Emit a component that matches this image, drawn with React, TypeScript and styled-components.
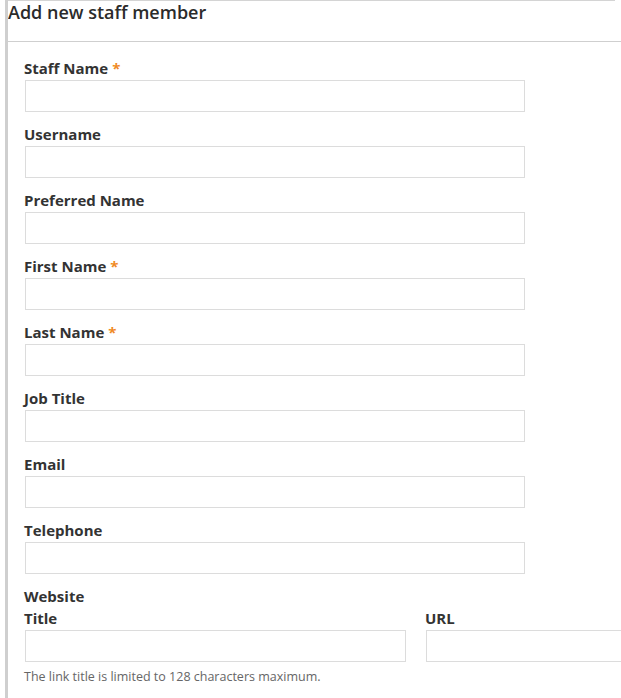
import styled, { createGlobalStyle } from 'styled-components';

const GlobalStyle = createGlobalStyle`
  html, body {
    margin: 0;
    padding: 0;
    background: #fff;
  }
  body {
    font-family: 'Open Sans', 'Noto Sans', sans-serif;
    color: #333;
    overflow: hidden;
  }
`;

const Panel = styled.div`
  margin-left: 5px;
  border-left: 3px solid #cfcfcf;
  min-height: 698px;
  overflow: hidden;
`;

const Header = styled.div`
  height: 42px;
  border-bottom: 1px solid #cfcfcf;
  box-sizing: border-box;
`;

const Heading = styled.h2`
  margin: 0 6px 0 0;
  border-top: 1px solid #d4d4d4;
  font-size: 18px;
  font-weight: 600;
  line-height: 22px;
  color: #2b2b2b;
`;

const Body = styled.div`
  padding: 16px 0 0 16px;
  display: flex;
  flex-direction: column;
  gap: 12px;
`;

const Field = styled.div`
  display: flex;
  flex-direction: column;
`;

const Label = styled.label`
  font-size: 15px;
  font-weight: 700;
  line-height: 20px;
  color: #333;
  margin-bottom: 2px;
`;

const Required = styled.span`
  color: #f08a24;
  margin-left: 4px;
`;

const TextInput = styled.input<{ $width?: number }>`
  box-sizing: border-box;
  width: ${(p) => (p.$width ? `${p.$width}px` : '500px')};
  height: 32px;
  margin-left: 1px;
  border: 1px solid #dcdcdc;
  border-radius: 0;
  padding: 4px 8px;
  font-family: inherit;
  font-size: 14px;
  outline: none;
  background: #fff;
`;

const LinkRow = styled.div`
  display: flex;
  gap: 19px;
`;

const LinkCol = styled.div`
  display: flex;
  flex-direction: column;
  flex-shrink: 0;
`;

const Help = styled.div`
  margin-top: 7px;
  font-size: 12.5px;
  line-height: 16px;
  color: #666;
`;

const fields = [
  { label: 'Staff Name', required: true },
  { label: 'Username' },
  { label: 'Preferred Name' },
  { label: 'First Name', required: true },
  { label: 'Last Name', required: true },
  { label: 'Job Title' },
  { label: 'Email' },
  { label: 'Telephone' },
];

export default function App() {
  return (
    <>
      <GlobalStyle />
      <Panel>
        <Header>
          <Heading>Add new staff member</Heading>
        </Header>
        <Body>
          {fields.map((f) => (
            <Field key={f.label}>
              <Label>
                {f.label}
                {f.required && <Required>*</Required>}
              </Label>
              <TextInput type="text" />
            </Field>
          ))}
          <Field>
            <Label>Website</Label>
            <LinkRow>
              <LinkCol>
                <Label>Title</Label>
                <TextInput type="text" $width={381} />
              </LinkCol>
              <LinkCol>
                <Label>URL</Label>
                <TextInput type="text" $width={200} />
              </LinkCol>
            </LinkRow>
            <Help>The link title is limited to 128 characters maximum.</Help>
          </Field>
        </Body>
      </Panel>
    </>
  );
}
